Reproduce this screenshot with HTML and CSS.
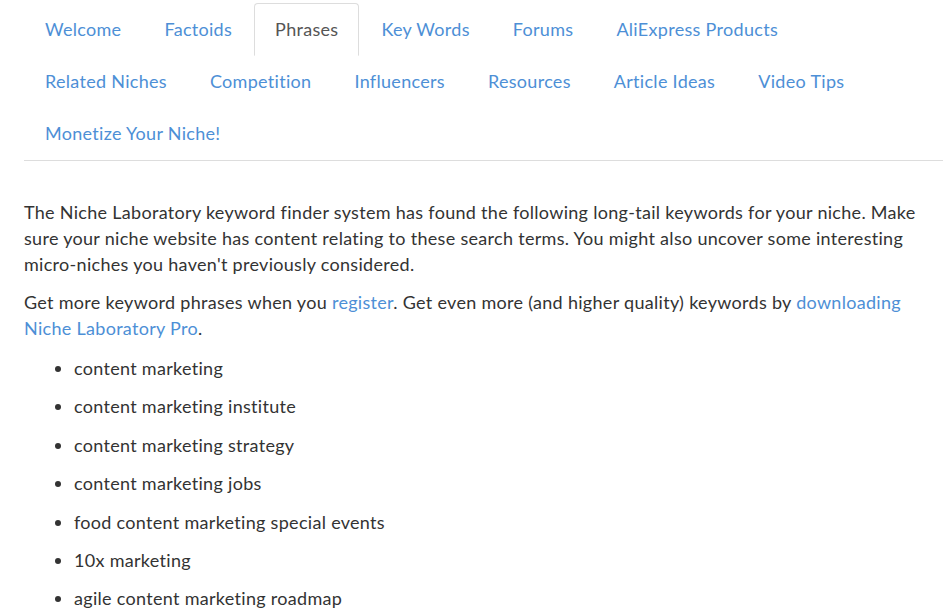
FILE: index.html
```html
<!DOCTYPE html>
<html lang="en">
<head>
    <meta charset="UTF-8">
    <title>Niche Laboratory - Phrases</title>
    <link rel="stylesheet" href="styles.css">
</head>
<body>
<div id="page">
    <ul class="tabs">
        <li><a href="#">Welcome</a></li>
        <li><a href="#">Factoids</a></li>
        <li class="active"><a href="#">Phrases</a></li>
        <li><a href="#">Key Words</a></li>
        <li><a href="#">Forums</a></li>
        <li><a href="#">AliExpress Products</a></li>
        <li><a href="#">Related Niches</a></li>
        <li><a href="#">Competition</a></li>
        <li><a href="#">Influencers</a></li>
        <li><a href="#">Resources</a></li>
        <li><a href="#">Article Ideas</a></li>
        <li><a href="#">Video Tips</a></li>
        <li><a href="#">Monetize Your Niche!</a></li>
    </ul>

    <div class="pane">
        <p>The Niche Laboratory keyword finder system has found the following long-tail keywords for your niche. Make sure your niche website has content relating to these search terms. You might also uncover some interesting micro-niches you haven't previously considered.</p>
        <p>Get more keyword phrases when you <a href="#">register</a>. Get even more (and higher quality) keywords by <a href="#">downloading Niche Laboratory Pro</a>.</p>

        <ul class="phrases">
            <li>content marketing</li>
            <li>content marketing institute</li>
            <li>content marketing strategy</li>
            <li>content marketing jobs</li>
            <li>food content marketing special events</li>
            <li>10x marketing</li>
            <li>agile content marketing roadmap</li>
            <li>b2b content marketing</li>
        </ul>
    </div>
</div>
</body>
</html>
```

FILE: styles.css
```css
body{
    margin: 0;
    font-family: Lato, "Liberation Sans", sans-serif;
    font-size: 18px;
    line-height: 26px;
    letter-spacing: 0.3px;
    color: #333;
    background: #fff;
    overflow: hidden;
}
a{
    color: #4d8fd6;
    text-decoration: none;
}

#page{
    padding: 3px 0 0 24px;
}

.tabs{
    display: flex;
    flex-wrap: wrap;
    list-style: none;
    margin: 0;
    padding: 0 0 1px;
    border-bottom: 1px solid #dddddd;
}
.tabs li{
    margin: 0 1px -1px 0;
}
.tabs a{
    display: block;
    padding: 12px 20px 13px;
    border: 1px solid transparent;
    border-radius: 4px 4px 0 0;
}
.tabs .active a{
    color: #555;
    background: #fff;
    border-color: #dddddd #dddddd transparent;
}

.pane{
    width: 900px;
    padding-top: 38px;
}
.pane p{
    margin: 0 0 12px;
}

.phrases{
    margin: -4px 0 0;
    padding: 0 0 0 50px;
}
.phrases li{
    padding: 6px 0 6.4px;
}
```
